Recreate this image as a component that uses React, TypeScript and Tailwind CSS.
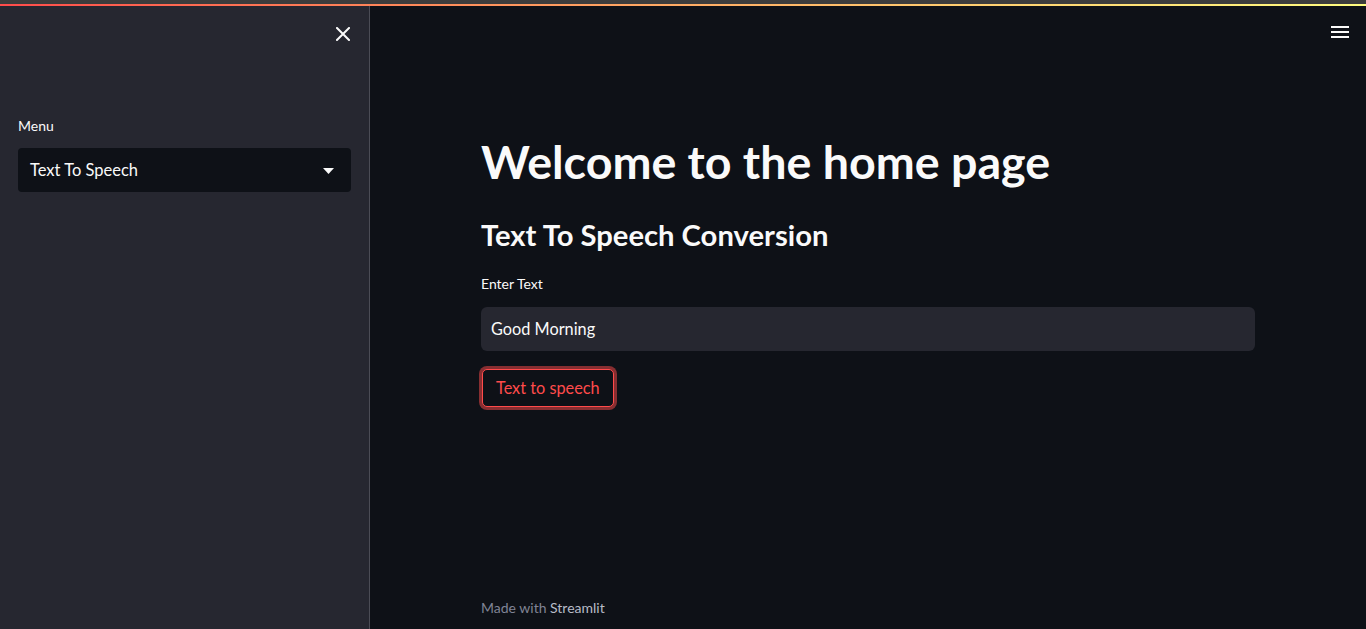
const font = { fontFamily: 'Lato, "Noto Sans", sans-serif' };

function Sidebar() {
  return (
    <aside className="flex w-[370px] shrink-0 flex-col border-r border-[#4b4c55] bg-[#262730] px-[18px]">
      <div className="flex h-[56px] items-center justify-end pr-[1px]">
        <svg width="14" height="14" viewBox="0 0 14 14">
          <path d="M1 1l12 12M13 1L1 13" stroke="#fafafa" strokeWidth="2" strokeLinecap="square" />
        </svg>
      </div>
      <label className="mt-[53px] text-[14px] text-[#fafafa]">Menu</label>
      <div className="mt-[12px] flex h-[44px] items-center justify-between rounded-[4px] bg-[#0e1117] pl-[12px] pr-[17px]">
        <span className="text-[16.5px] text-[#fafafa]">Text To Speech</span>
        <svg width="11" height="6" viewBox="0 0 11 6" className="mt-[1px]">
          <path d="M0 0h11L5.5 6z" fill="#fafafa" />
        </svg>
      </div>
    </aside>
  );
}

function Main() {
  return (
    <main className="flex min-w-0 flex-1 flex-col bg-[#0e1117]">
      <div className="flex h-[52px] items-center justify-end pr-[17px]">
        <svg width="18" height="12" viewBox="0 0 18 12">
          <rect x="0" y="0" width="18" height="2" fill="#fafafa" />
          <rect x="0" y="5" width="18" height="2" fill="#fafafa" />
          <rect x="0" y="10" width="18" height="2" fill="#fafafa" />
        </svg>
      </div>
      <div className="flex flex-1 justify-center">
        <div className="flex w-[774px] flex-col pt-[75px]">
          <h1 className="text-[46.6px] font-bold leading-[56px] text-[#fafafa]">Welcome to the home page</h1>
          <h2 className="mt-[28px] text-[29.2px] font-bold leading-[36px] text-[#fafafa]">Text To Speech Conversion</h2>
          <label className="mt-[20px] text-[14px] text-[#fafafa]">Enter Text</label>
          <div className="mt-[13px] flex h-[44px] items-center rounded-[6px] bg-[#262730] px-[10px]">
            <span className="text-[16.3px] text-[#fafafa]">Good Morning</span>
          </div>
          <div className="mt-[18px] pl-[1px]">
            <button className="h-[38px] rounded-[5px] border border-[#ff4b4b] bg-[#0e1117] px-[13px] text-[16.3px] text-[#ff4b4b] shadow-[0_0_0_3px_rgba(255,75,75,0.5)]">
              Text to speech
            </button>
          </div>
          <div className="mt-auto pb-[11px] text-[14px] text-[#808495]">
            Made with <span className="text-[#b8bcc8]">Streamlit</span>
          </div>
        </div>
      </div>
    </main>
  );
}

export default function App() {
  return (
    <div className="flex h-[629px] w-[1366px] flex-col overflow-hidden" style={font}>
      <div className="h-[4px] bg-[#3c3c3c]" />
      <div className="h-[2px] bg-gradient-to-r from-[#ff4b4b] to-[#fffd80]" />
      <div className="flex min-h-0 flex-1">
        <Sidebar />
        <Main />
      </div>
    </div>
  );
}
